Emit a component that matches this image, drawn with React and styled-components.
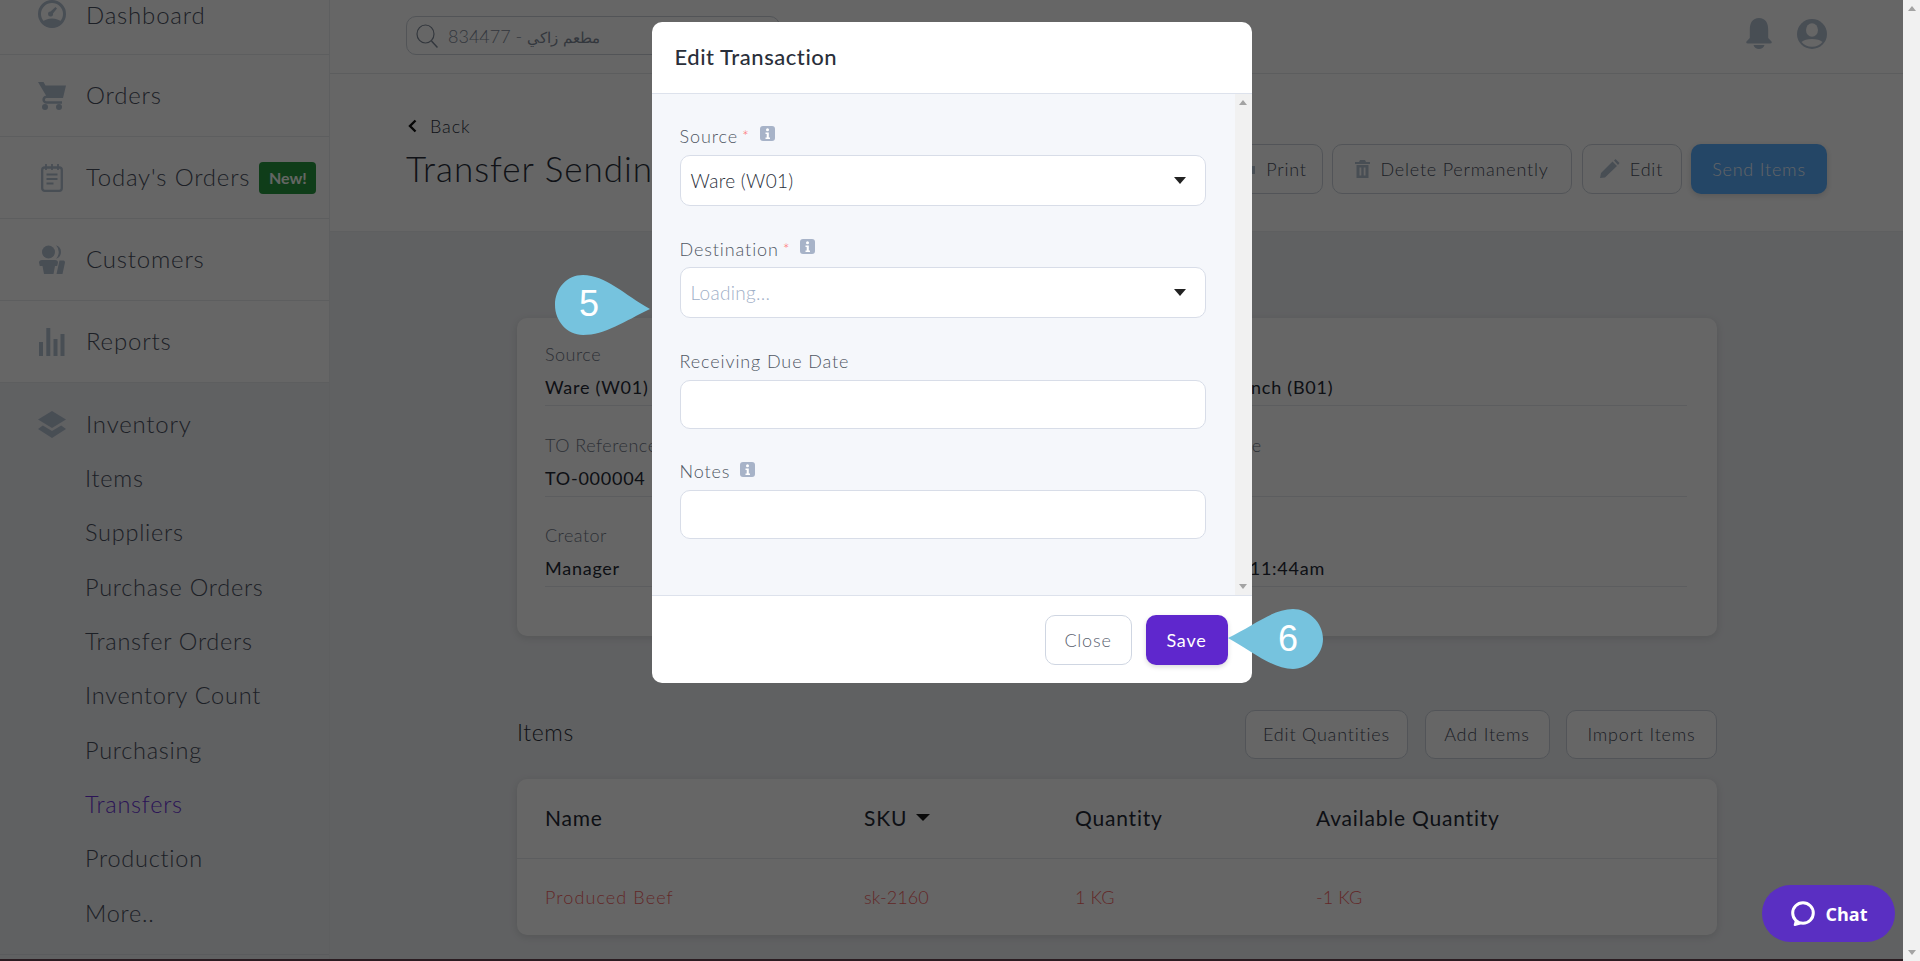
import React from 'react';
import styled, { createGlobalStyle } from 'styled-components';

const FONT = `Lato, "Noto Sans", "DejaVu Sans", sans-serif`;

const GlobalStyle = createGlobalStyle`
  html, body {
    margin: 0;
    padding: 0;
    height: 961px;
    overflow: hidden;
    background: #f1f1f1;
    font-family: ${FONT};
  }
  * { box-sizing: border-box; }
`;

const Shell = styled.div`
  position: relative;
  display: flex;
  width: 1920px;
  height: 961px;
  overflow: hidden;
`;

const Page = styled.div`
  display: flex;
  flex-direction: column;
  width: 1903px;
  height: 961px;
  background: #f0f2f5;
`;

const PageRow = styled.div`
  display: flex;
  height: 959px;
`;

const BottomEdge = styled.div`
  height: 2px;
  background: #2a1c21;
`;

const Sidebar = styled.aside`
  width: 330px;
  flex: none;
  overflow: hidden;
  border-right: 1px solid #eceef1;
`;

const NavList = styled.nav`
  background: #fff;
`;

const NavItem = styled.div`
  display: flex;
  align-items: center;
  height: 82px;
  padding-left: 38px;
  border-bottom: 1px solid #e8eaee;

  &:first-child {
    align-items: flex-start;
    height: 55px;
  }
`;

const IconSlot = styled.span`
  display: flex;
  justify-content: center;
  width: 28px;
  margin-right: 20px;
  color: #b4c2d3;
`;

const NavLabel = styled.span`
  padding-bottom: 2px;
  font-size: 24px;
  font-weight: 300;
  letter-spacing: 0.8px;
  color: #4a5060;
`;

const NewBadge = styled.span`
  display: inline-flex;
  align-items: center;
  justify-content: center;
  width: 57px;
  height: 32px;
  margin-left: 9px;
  border-radius: 4px;
  background: #26993f;
  color: #f7fff7;
  font-size: 16px;
  font-weight: 700;
`;

const InventorySection = styled.div`
  height: 572px;
  background: #f0f2f5;
  border-bottom: 1px solid #e2e4e8;
`;

const InventoryHead = styled.div`
  display: flex;
  align-items: center;
  height: 69px;
  padding: 27px 0 14px 38px;
`;

const SubItem = styled.div`
  display: flex;
  align-items: center;
  height: 54.33px;
  padding: 0 0 2px 85px;
  font-size: 23.5px;
  font-weight: 300;
  letter-spacing: 0.75px;
  color: ${(p) => (p.$active ? '#6b33d6' : '#4a5060')};
`;

const Main = styled.main`
  flex: 1;
  display: flex;
  flex-direction: column;
  min-width: 0;
`;

const TopBar = styled.header`
  display: flex;
  align-items: center;
  justify-content: space-between;
  height: 74px;
  padding: 0 76px;
  background: #fff;
  border-bottom: 1px solid #e6e8ec;
`;

const SearchBox = styled.div`
  display: flex;
  align-items: center;
  gap: 10px;
  width: 374px;
  height: 39px;
  margin-top: -2px;
  padding-left: 9px;
  border: 1px solid #ccd2da;
  border-radius: 10px;
  color: #7f8a99;
  font-family: ${FONT};
  font-size: 18px;
  font-weight: 300;
  letter-spacing: 0.5px;
`;

const ArabicName = styled.span`
  font-family: "DejaVu Sans", sans-serif;
  font-size: 14.5px;
  letter-spacing: 0;
`;

const TopIcons = styled.div`
  display: flex;
  align-items: center;
  gap: 25px;
  color: #b4c2d3;
  margin-top: -6px;
`;

const PageHeader = styled.section`
  display: flex;
  justify-content: space-between;
  height: 158px;
  padding: 0 76px;
  background: #fff;
  border-bottom: 1px solid #eceef1;
`;

const HeadLeft = styled.div`
  display: flex;
  flex-direction: column;
  white-space: nowrap;
`;

const BackLink = styled.div`
  display: flex;
  align-items: center;
  gap: 13px;
  height: 24px;
  margin: 40px 0 8px 2px;
  font-size: 18px;
  font-weight: 300;
  letter-spacing: 0.9px;
  color: #2a3040;
`;

const PageTitle = styled.h1`
  margin: 0;
  height: 44px;
  line-height: 44px;
  font-size: 35px;
  font-weight: 300;
  letter-spacing: 1px;
  color: #2a2f3a;
`;

const HeadActions = styled.div`
  display: flex;
  gap: 9.5px;
  margin-top: 70px;
`;

const OutlineButton = styled.div`
  display: flex;
  align-items: center;
  justify-content: center;
  gap: 10px;
  width: ${(p) => p.$w}px;
  height: ${(p) => p.$h || 50}px;
  padding-bottom: 1px;
  border: 1px solid #cdd3dc;
  border-radius: 10px;
  background: #fff;
  font-size: 18px;
  font-weight: 300;
  letter-spacing: 0.8px;
  color: #4a5060;
  white-space: nowrap;
  svg { color: #b4c2d3; }
`;

const PrimaryButton = styled(OutlineButton)`
  border: none;
  background: #5aafff;
  color: #f2f8ff;
  font-weight: 300;
  box-shadow: 0 2px 6px rgba(0, 0, 0, 0.15);
`;

const Content = styled.div`
  flex: 1;
  padding: 86px 186px 0 187px;
  background: #f0f2f5;
`;

const Card = styled.section`
  border-radius: 10px;
  background: #fff;
  box-shadow: 0 2px 8px rgba(0, 0, 0, 0.12);
`;

const InfoCard = styled(Card)`
  display: grid;
  grid-template-columns: 1fr 465px;
  grid-auto-rows: 65px;
  align-content: start;
  column-gap: 30px;
  row-gap: 25.5px;
  height: 318px;
  padding: 23px 30px 0 28px;
`;

const InfoCell = styled.div`
  border-bottom: 1px solid #e7e9ed;
`;

const InfoLabel = styled.div`
  height: 26px;
  margin-bottom: 7px;
  line-height: 26px;
  font-size: 18px;
  font-weight: 300;
  letter-spacing: 0.5px;
  color: #707888;
`;

const InfoValue = styled.div`
  height: 28px;
  line-height: 26px;
  font-size: 18px;
  font-weight: 400;
  letter-spacing: 0.75px;
  color: #252a35;
`;

const ItemsHead = styled.div`
  display: flex;
  align-items: center;
  justify-content: space-between;
  margin: 74px 0 20px;
`;

const ItemsTitle = styled.h2`
  margin: 0 0 6px;
  font-size: 23px;
  font-weight: 300;
  letter-spacing: 0.6px;
  color: #2a2f3a;
`;

const ItemsActions = styled.div`
  display: flex;
  gap: 16.5px;
`;

const TableRow = styled.div`
  display: grid;
  grid-template-columns: 319px 211px 241px 1fr;
  align-items: center;
  height: ${(p) => p.$h}px;
  padding-left: 28px;
  border-bottom: ${(p) => (p.$line ? '1px solid #e7e9ed' : 'none')};
`;

const HeadCell = styled.div`
  display: flex;
  align-items: center;
  gap: 9px;
  padding-bottom: 3px;
  font-size: 21px;
  font-weight: 400;
  letter-spacing: 0.8px;
  color: #252a35;
`;

const SortArrow = styled.span`
  width: 0;
  height: 0;
  border-left: 7px solid transparent;
  border-right: 7px solid transparent;
  border-top: 7px solid #1a1a1a;
`;

const RedCell = styled.div`
  font-size: 18px;
  font-weight: 300;
  letter-spacing: ${(p) => p.$ls}px;
  color: #f56565;
`;

const Overlay = styled.div`
  position: absolute;
  top: 0;
  left: 0;
  width: 1903px;
  height: 959px;
  background: rgba(0, 0, 0, 0.6);
  display: flex;
  justify-content: center;
  align-items: flex-start;
  padding-top: 22px;
`;

const Modal = styled.div`
  display: flex;
  flex-direction: column;
  width: 600px;
  height: 661px;
  border-radius: 10px;
  background: #fff;
  overflow: hidden;
`;

const ModalHeader = styled.div`
  display: flex;
  align-items: center;
  flex: none;
  height: 72px;
  padding: 0 0 2px 23px;
  border-bottom: 1px solid #dde2ec;
  font-size: 22px;
  font-weight: 500;
  letter-spacing: 0.55px;
  color: #2a2f3a;
`;

const ModalBody = styled.div`
  display: flex;
  flex: none;
  height: 501px;
  background: #f5f7fb;
`;

const FormColumn = styled.div`
  flex: 1;
  display: flex;
  flex-direction: column;
  gap: 30.33px;
  padding: 29px 29px 0 28px;
`;

const Field = styled.div`
  display: flex;
  flex-direction: column;
`;

const FieldLabel = styled.label`
  display: flex;
  align-items: center;
  height: 26px;
  margin-bottom: ${(p) => p.$gap || 5}px;
  padding-bottom: 1px;
  font-size: 18px;
  font-weight: 300;
  letter-spacing: 0.9px;
  color: #4f5663;
`;

const Star = styled.span`
  margin-left: 4px;
  color: #f66;
  font-size: 16px;
`;

const InfoTag = styled.span`
  display: inline-flex;
  margin: -4px 0 0 10px;
`;

const InputBox = styled.div`
  display: flex;
  align-items: center;
  justify-content: space-between;
  height: ${(p) => p.$h}px;
  padding: 0 19px 0 10px;
  border: 1px solid #d8dde8;
  border-radius: 10px;
  background: #fff;
  font-size: 19px;
  font-weight: 300;
  letter-spacing: 0.3px;
  color: ${(p) => (p.$placeholder ? '#9fb0c8' : '#2a2f3a')};
`;

const Caret = styled.span`
  width: 0;
  height: 0;
  border-left: 6.5px solid transparent;
  border-right: 6.5px solid transparent;
  border-top: 7px solid #222;
`;

const ScrollTrack = styled.div`
  display: flex;
  flex-direction: column;
  align-items: center;
  justify-content: space-between;
  flex: none;
  width: 17px;
  padding: 6px 0;
  background: #f1f1f1;
`;

const ArrowUp = styled.span`
  width: 0;
  height: 0;
  border-left: 4px solid transparent;
  border-right: 4px solid transparent;
  border-bottom: 5px solid #a3a3a3;
`;

const ArrowDown = styled.span`
  width: 0;
  height: 0;
  border-left: 4px solid transparent;
  border-right: 4px solid transparent;
  border-top: 5px solid #a3a3a3;
`;

const ModalFooter = styled.div`
  display: flex;
  justify-content: flex-end;
  gap: 14px;
  flex: 1;
  padding: 19px 24px 0 0;
  border-top: 1px solid #dde2ec;
`;

const SaveButton = styled(OutlineButton)`
  border: none;
  background: #5f27cd;
  color: #fff;
  font-weight: 400;
  box-shadow: 0 2px 5px rgba(0, 0, 0, 0.15);
`;

const CloseButton = styled(OutlineButton)`
  border-color: #cfd6e2;
  color: #5a6270;
`;

const Callout = styled.div`
  position: absolute;
  left: ${(p) => p.$x}px;
  top: ${(p) => p.$y}px;
  width: 95px;
  height: 60px;
  color: #fff;
  font-family: "Liberation Sans", Arial, sans-serif;
  font-size: 36px;
`;

const CalloutNumber = styled.span`
  position: absolute;
  left: ${(p) => p.$x}px;
  top: ${(p) => p.$y}px;
  line-height: 42px;
`;

const ChatButton = styled.div`
  position: absolute;
  right: 25px;
  bottom: 19px;
  display: flex;
  align-items: center;
  justify-content: center;
  gap: 11px;
  width: 133px;
  height: 57px;
  border-radius: 29px;
  background: #5a2fc2;
  color: #fff;
  font-family: "Open Sans", sans-serif;
  font-size: 18px;
  font-weight: 700;
`;

const PageScroll = styled(ScrollTrack)`
  height: 961px;
`;

const GaugeIcon = () => (
  <svg width="28" height="28" viewBox="0 0 28 28" fill="currentColor">
    <circle cx="14" cy="14" r="12.5" fill="none" stroke="currentColor" strokeWidth="3" />
    <path d="M4 22.5C7 19.5 10 18.5 14 18.5s7 1 10 4c-2.5 3.300-6 5-10 5s-7.500-1.700-10-5z" />
    <path d="M12.500 11.500l5-4.500 1.500 1.500-4 5a2.500 2.500 0 1 1-2.500-2z" />
  </svg>
);

const CartIcon = () => (
  <svg width="28" height="28" viewBox="0 0 28 28" fill="currentColor">
    <path d="M0 0h5.500l2 3.500H28L25 16H9.500z" />
    <path d="M8 13.500H10.500M24 20.500H8.500a2.800 2.800 0 0 1 0-5.700H11" fill="none" stroke="currentColor" strokeWidth="2.600" />
    <circle cx="7" cy="25" r="3" />
    <circle cx="21" cy="25" r="3" />
  </svg>
);

const ClipboardIcon = () => (
  <svg width="22" height="28" viewBox="0 0 22 28" fill="none" stroke="currentColor">
    <rect x="1.200" y="3.500" width="19.600" height="23.300" rx="2.500" strokeWidth="2.300" />
    <path d="M5 0v6M11 0v6M17 0v6" strokeWidth="1.800" />
    <path d="M5.500 10.500h11M5.500 15h11M5.500 19.500h7" strokeWidth="2" />
  </svg>
);

const CustomersIcon = () => (
  <svg width="26" height="29" viewBox="0 0 26 29" fill="currentColor">
    <circle cx="9.500" cy="7" r="6.500" />
    <path d="M17 .3a7 7 0 0 1 0 13.400 9.500 9.500 0 0 0 0-13.400z" />
    <path d="M0 17.500Q0 15 3 15h13q3 0 3 2.500l-.8 3.500H16L14.500 29H5L3.500 21H.8z" />
    <path d="M20.500 15.500h4q1.500 0 1.500 2l-2.500 11.500h-6z" />
  </svg>
);

const BarsIcon = () => (
  <svg width="26" height="28" viewBox="0 0 26 28" fill="currentColor">
    <rect x="0" y="14" width="4" height="14" />
    <rect x="7.300" y="0" width="4" height="28" />
    <rect x="14.500" y="11" width="4" height="17" />
    <rect x="21.500" y="6" width="4" height="22" />
  </svg>
);

const LayersIcon = () => (
  <svg width="28" height="27" viewBox="0 0 28 27" fill="currentColor">
    <path d="M14 0l14 8.500L14 17 0 8.500z" />
    <path d="M4.800 14.500L14 20l9.200-5.500L28 18l-14 9-14-9z" />
  </svg>
);

const BellIcon = () => (
  <svg width="26" height="31" viewBox="0 0 26 31" fill="currentColor">
    <path d="M13 0C6.500 0 3.800 5 3.800 11.500V20L.5 23.500Q-.5 25.500 2 25.500h22q2.500 0 1.500-2L22.200 20v-8.500C22.200 5 19.500 0 13 0z" />
    <path d="M7.500 27h11c-.7 2.500-2.900 4-5.500 4s-4.800-1.500-5.500-4z" />
  </svg>
);

const UserIcon = () => (
  <svg width="30" height="30" viewBox="0 0 30 30">
    <circle cx="15" cy="15" r="15" fill="currentColor" />
    <ellipse cx="15" cy="11" rx="6" ry="6.800" fill="#fff" />
    <path d="M4.500 23c2-2 6-3 10.500-3s8.500 1 10.500 3c-2.500 3-6 4.700-10.500 4.700S7 26 4.500 23z" fill="#fff" />
  </svg>
);

const SearchIcon = () => (
  <svg width="22" height="24" viewBox="0 0 22 24" fill="none" stroke="currentColor" strokeWidth="1.200">
    <ellipse cx="9.500" cy="10" rx="8.500" ry="9" />
    <path d="M15.500 17l6 6.500" strokeWidth="1.500" />
  </svg>
);

const ChevronIcon = () => (
  <svg width="9" height="14" viewBox="0 0 9 14" fill="none" stroke="#111" strokeWidth="2.400">
    <path d="M7.500 1.500L2 7l5.500 5.500" />
  </svg>
);

const PrinterIcon = () => (
  <svg width="18" height="18" viewBox="0 0 18 18" fill="currentColor">
    <path d="M4 0h10v5H4zM1 6h16v8h-3v4H4v-4H1z" />
  </svg>
);

const TrashIcon = () => (
  <svg width="15" height="18" viewBox="0 0 15 18" fill="currentColor">
    <path d="M5 0h5l1 2h4v2H0V2h4z" />
    <path fillRule="evenodd" d="M1.500 5h12v13h-12zM4.500 7.500v8h1.800v-8zM8.700 7.500v8h1.800v-8z" />
  </svg>
);

const PenIcon = () => (
  <svg width="20" height="19" viewBox="0 0 20 19" fill="currentColor">
    <path d="M0 19l1-5L12.500 2.500l4.500 4.500L5 18.500zM14 1.500L15.500 0l4 4-1.500 2z" />
  </svg>
);

const InfoIcon = () => (
  <svg width="15" height="15" viewBox="0 0 15 15">
    <rect width="15" height="15" rx="3" fill="#a7b3c8" />
    <circle cx="7.500" cy="3.800" r="1.500" fill="#fff" />
    <path d="M5.500 6.500h3.300v5h1.200v1.500H5.500v-1.500h1.200V8H5.500z" fill="#fff" />
  </svg>
);

const TeardropRight = () => (
  <svg width="95" height="60" viewBox="0 0 95 60" fill="#76c3de">
    <path d="M28 0C50 0 70 20 95 34 70 46 50 60 28 60 12 60 0 46 0 30 0 13 12 0 28 0z" />
  </svg>
);

const TeardropLeft = () => (
  <svg width="95" height="60" viewBox="0 0 95 60" fill="#76c3de">
    <path d="M65 0C80 0 95 13 95 30 95 46 80 60 65 60 45 60 25 43 0 29 25 17 45 0 65 0z" />
  </svg>
);

const ChatIcon = () => (
  <svg width="25" height="26" viewBox="0 0 25 26" fill="none" stroke="#fff" strokeWidth="3">
    <circle cx="13" cy="12" r="10.300" />
    <path d="M6 19.500L4.800 24l5.500-1.500" strokeLinejoin="round" fill="#fff" strokeWidth="2.200" />
  </svg>
);

const navItems = [
  { label: 'Dashboard', icon: <GaugeIcon /> },
  { label: 'Orders', icon: <CartIcon /> },
  { label: "Today's Orders", icon: <ClipboardIcon />, badge: 'New!' },
  { label: 'Customers', icon: <CustomersIcon /> },
  { label: 'Reports', icon: <BarsIcon /> },
];

const inventoryLinks = [
  'Items',
  'Suppliers',
  'Purchase Orders',
  'Transfer Orders',
  'Inventory Count',
  'Purchasing',
  'Transfers',
  'Production',
  'More..',
];

const infoCells = [
  ['Source', 'Ware (W01)'],
  ['To', 'Branch (B01)'],
  ['TO Reference', 'TO-000004'],
  ['Date', ''],
  ['Creator', 'Manager'],
  ['At', '11 11:44am'],
];

export default function App() {
  return (
    <>
      <GlobalStyle />
      <Shell>
        <Page>
          <PageRow>
            <Sidebar>
              <NavList>
                {navItems.map((item) => (
                  <NavItem key={item.label}>
                    <IconSlot>{item.icon}</IconSlot>
                    <NavLabel>{item.label}</NavLabel>
                    {item.badge && <NewBadge>{item.badge}</NewBadge>}
                  </NavItem>
                ))}
              </NavList>
              <InventorySection>
                <InventoryHead>
                  <IconSlot>
                    <LayersIcon />
                  </IconSlot>
                  <NavLabel>Inventory</NavLabel>
                </InventoryHead>
                {inventoryLinks.map((link) => (
                  <SubItem key={link} $active={link === 'Transfers'}>
                    {link}
                  </SubItem>
                ))}
              </InventorySection>
            </Sidebar>
            <Main>
              <TopBar>
                <SearchBox>
                  <SearchIcon />
                  <span>
                    834477 - <ArabicName>مطعم زاكي</ArabicName>
                  </span>
                </SearchBox>
                <TopIcons>
                  <BellIcon />
                  <UserIcon />
                </TopIcons>
              </TopBar>
              <PageHeader>
                <HeadLeft>
                  <BackLink>
                    <ChevronIcon />
                    Back
                  </BackLink>
                  <PageTitle>Transfer Sending</PageTitle>
                </HeadLeft>
                <HeadActions>
                  <OutlineButton $w={100}>
                    <PrinterIcon />
                    Print
                  </OutlineButton>
                  <OutlineButton $w={240}>
                    <TrashIcon />
                    Delete Permanently
                  </OutlineButton>
                  <OutlineButton $w={100}>
                    <PenIcon />
                    Edit
                  </OutlineButton>
                  <PrimaryButton $w={136}>Send Items</PrimaryButton>
                </HeadActions>
              </PageHeader>
              <Content>
                <InfoCard>
                  {infoCells.map(([label, value]) => (
                    <InfoCell key={label}>
                      <InfoLabel>{label}</InfoLabel>
                      <InfoValue>{value}</InfoValue>
                    </InfoCell>
                  ))}
                </InfoCard>
                <ItemsHead>
                  <ItemsTitle>Items</ItemsTitle>
                  <ItemsActions>
                    <OutlineButton $w={163} $h={49}>Edit Quantities</OutlineButton>
                    <OutlineButton $w={125} $h={49}>Add Items</OutlineButton>
                    <OutlineButton $w={151} $h={49}>Import Items</OutlineButton>
                  </ItemsActions>
                </ItemsHead>
                <Card>
                  <TableRow $h={80} $line>
                    <HeadCell>Name</HeadCell>
                    <HeadCell>
                      SKU <SortArrow />
                    </HeadCell>
                    <HeadCell>Quantity</HeadCell>
                    <HeadCell>Available Quantity</HeadCell>
                  </TableRow>
                  <TableRow $h={76}>
                    <RedCell $ls={1.1}>Produced Beef</RedCell>
                    <RedCell $ls={0.1}>sk-2160</RedCell>
                    <RedCell $ls={0.1}>1 KG</RedCell>
                    <RedCell $ls={0.1}>-1 KG</RedCell>
                  </TableRow>
                </Card>
              </Content>
            </Main>
          </PageRow>
          <BottomEdge />
        </Page>
        <PageScroll>
          <ArrowUp />
          <ArrowDown />
        </PageScroll>

        <Overlay>
          <Modal>
            <ModalHeader>Edit Transaction</ModalHeader>
            <ModalBody>
              <FormColumn>
                <Field>
                  <FieldLabel $gap={6}>
                    Source<Star>*</Star>
                    <InfoTag>
                      <InfoIcon />
                    </InfoTag>
                  </FieldLabel>
                  <InputBox $h={51}>
                    Ware (W01)
                    <Caret />
                  </InputBox>
                </Field>
                <Field>
                  <FieldLabel>
                    Destination<Star>*</Star>
                    <InfoTag>
                      <InfoIcon />
                    </InfoTag>
                  </FieldLabel>
                  <InputBox $h={51} $placeholder>
                    Loading...
                    <Caret />
                  </InputBox>
                </Field>
                <Field>
                  <FieldLabel>Receiving Due Date</FieldLabel>
                  <InputBox $h={49} />
                </Field>
                <Field>
                  <FieldLabel>
                    Notes
                    <InfoTag>
                      <InfoIcon />
                    </InfoTag>
                  </FieldLabel>
                  <InputBox $h={49} />
                </Field>
              </FormColumn>
              <ScrollTrack>
                <ArrowUp />
                <ArrowDown />
              </ScrollTrack>
            </ModalBody>
            <ModalFooter>
              <CloseButton $w={87}>Close</CloseButton>
              <SaveButton $w={82}>Save</SaveButton>
            </ModalFooter>
          </Modal>
        </Overlay>

        <Callout $x={555} $y={275}>
          <TeardropRight />
          <CalloutNumber $x={24} $y={8}>5</CalloutNumber>
        </Callout>
        <Callout $x={1228} $y={609}>
          <TeardropLeft />
          <CalloutNumber $x={50} $y={9}>6</CalloutNumber>
        </Callout>

        <ChatButton>
          <ChatIcon />
          Chat
        </ChatButton>
      </Shell>
    </>
  );
}
